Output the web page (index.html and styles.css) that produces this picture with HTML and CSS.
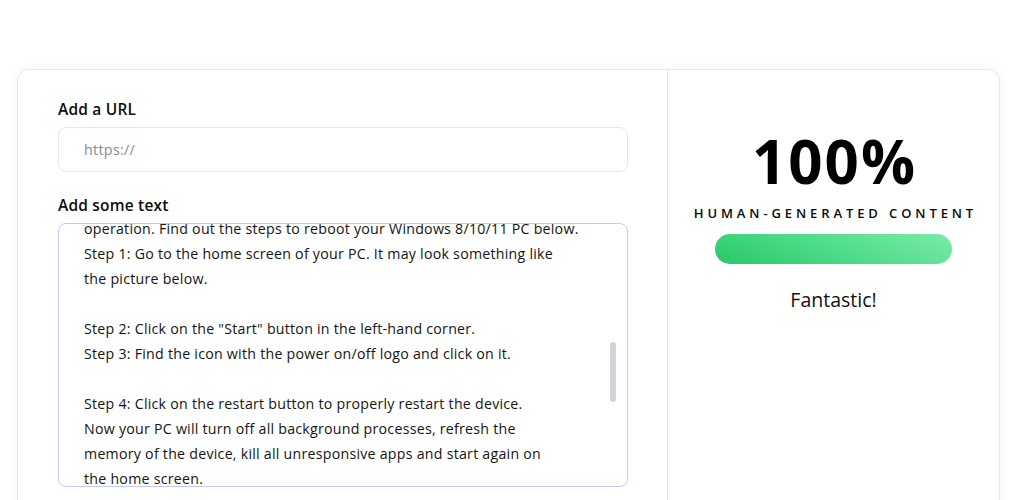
FILE: index.html
```html
<!DOCTYPE html>
<html>
<head>
<meta charset="utf-8">
<link rel="stylesheet" href="styles.css">
</head>
<body>
<div class="card">
  <div class="left">
    <label class="label">Add a URL</label>
    <div class="input"><span class="placeholder">https://</span></div>
    <label class="label label-text">Add some text</label>
    <div class="textarea">
      <div class="content">operation. Find out the steps to reboot your Windows 8/10/11 PC below.<br>Step 1: Go to the home screen of your PC. It may look something like<br>the picture below.<br><br>Step 2: Click on the "Start" button in the left-hand corner.<br>Step 3: Find the icon with the power on/off logo and click on it.<br><br>Step 4: Click on the restart button to properly restart the device.<br>Now your PC will turn off all background processes, refresh the<br>memory of the device, kill all unresponsive apps and start again on<br>the home screen.<br>Once the device restarts, check whether the issue is resolved.</div>
      <div class="thumb"></div>
    </div>
  </div>
  <div class="right">
    <div class="score">100%</div>
    <div class="kind">HUMAN-GENERATED CONTENT</div>
    <div class="bar"></div>
    <div class="verdict">Fantastic!</div>
  </div>
</div>
</body>
</html>
```
FILE: styles.css
```css
* { box-sizing: border-box; }
html, body { margin: 0; padding: 0; background: #ffffff; }
body {
  font-family: "Open Sans", "DejaVu Sans", sans-serif;
  color: #111111;
  overflow: hidden;
  height: 500px;
}
.card {
  margin: 69px 14px 0 17px;
  height: 520px;
  border: 1px solid #e6e8f3;
  border-radius: 12px;
  box-shadow: 0 0 12px rgba(90, 100, 220, 0.06);
  display: grid;
  grid-template-columns: 649px 1fr;
  background: #fff;
}
.left {
  padding: 28px 39px 0 40px;
  display: flex;
  flex-direction: column;
}
.label {
  display: block;
  font-size: 15.5px;
  line-height: 22px;
  font-weight: 600;
  letter-spacing: 0.2px;
  color: #0d0d0d;
  margin-bottom: 7px;
}
.label-text { margin-top: 22px; margin-bottom: 7px; }
.input {
  height: 45px;
  border: 1px solid #e6e7ec;
  border-radius: 8px;
  padding-left: 25px;
  display: flex;
  align-items: center;
}
.placeholder { font-size: 14.3px; letter-spacing: 0.3px; color: #868b93; }
.textarea {
  position: relative;
  height: 264px;
  border: 1px solid #c4caf8;
  border-radius: 8px;
  overflow: hidden;
  padding-left: 25px;
}
.content {
  margin-top: -8px;
  font-size: 14.2px;
  letter-spacing: 0.25px;
  line-height: 25px;
  color: #141414;
  white-space: nowrap;
}
.thumb {
  position: absolute;
  right: 11px;
  top: 118px;
  width: 6px;
  height: 60px;
  border-radius: 3px;
  background: #d3d4da;
}
.right {
  border-left: 1px solid #e8e9ee;
  display: flex;
  flex-direction: column;
  align-items: center;
  padding-top: 61px;
}
.score {
  font-size: 60px;
  line-height: 60px;
  font-weight: 700;
  color: #000;
  letter-spacing: 2px;
  margin-right: -2px;
}
.kind {
  margin-top: 14px;
  font-size: 13px;
  line-height: 16px;
  font-weight: 600;
  letter-spacing: 3.9px;
  color: #0a0a0a;
  margin-right: -3.9px;
}
.bar {
  margin-top: 13px;
  width: 237px;
  height: 30px;
  border-radius: 15px;
  background: linear-gradient(20deg, #27c866 0%, #4fdc8a 50%, #7ceaaa 100%);
}
.verdict {
  margin-top: 24px;
  font-size: 19.5px;
  line-height: 24px;
  color: #111;
}
```
